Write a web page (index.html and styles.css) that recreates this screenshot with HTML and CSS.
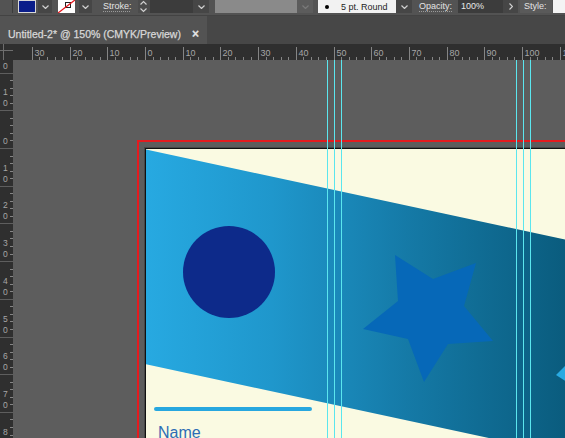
FILE: index.html
```html
<!DOCTYPE html>
<html lang="en">
<head>
  <meta charset="UTF-8">
  <title>Untitled-2* @ 150% (CMYK/Preview)</title>
  <link rel="stylesheet" href="styles.css">
</head>
<body>
  <div class="app">
    <!-- control bar -->
    <div class="control-bar">
      <div class="grip"></div>
      <div class="swatch fill"></div>
      <div class="drop"><svg width="7" height="4"><polyline points="0.5,0.5 3.5,3.5 6.5,0.5"/></svg></div>
      <div class="swatch stroke">
        <svg width="17" height="13">
          <rect x="7.5" y="2.5" width="5" height="5" fill="none" stroke="#222"/>
          <line x1="0" y1="13" x2="17" y2="0" stroke="#e8151b" stroke-width="1.3"/>
        </svg>
      </div>
      <div class="drop narrow"><svg width="7" height="4"><polyline points="0.5,0.5 3.5,3.5 6.5,0.5"/></svg></div>
      <span class="label stroke-label">Stroke:</span>
      <div class="spinner">
        <svg width="9" height="13">
          <polyline points="1.5,4.5 4.5,1.5 7.5,4.5"/>
          <polyline points="1.5,8.5 4.5,11.5 7.5,8.5"/>
        </svg>
      </div>
      <div class="input weight"></div>
      <div class="drop wide"><svg width="7" height="4"><polyline points="0.5,0.5 3.5,3.5 6.5,0.5"/></svg></div>
      <div class="field"></div>
      <div class="drop wide dim"><svg width="7" height="4"><polyline points="0.5,0.5 3.5,3.5 6.5,0.5"/></svg></div>
      <div class="brush"><span class="dot"></span><span>5 pt. Round</span></div>
      <div class="drop wide"><svg width="7" height="4"><polyline points="0.5,0.5 3.5,3.5 6.5,0.5"/></svg></div>
      <span class="label opacity-label">Opacity:</span>
      <div class="input opacity">100%</div>
      <div class="drop next"><svg width="4" height="7"><polyline points="0.5,0.5 3.5,3.5 0.5,6.5"/></svg></div>
      <span class="label style-label">Style:</span>
      <div class="style-box"></div>
    </div>

    <!-- document tab -->
    <div class="tab-bar">
      <div class="tab">
        <span class="tab-title">Untitled-2* @ 150% (CMYK/Preview)</span>
        <span class="tab-close">×</span>
      </div>
    </div>

    <!-- rulers + canvas -->
    <div class="workspace">
      <div class="ruler-corner">
        <svg width="13" height="16">
          <line x1="3.5" y1="0" x2="3.5" y2="16"/>
          <line x1="0" y1="6.5" x2="13" y2="6.5"/>
        </svg>
      </div>
      <svg id="ruler-h" class="ruler ruler-h" width="552" height="16" viewBox="13 44 552 16"></svg>
      <svg id="ruler-v" class="ruler ruler-v" width="13" height="378" viewBox="0 60 13 378"></svg>
      <div class="canvas">
        <svg class="art" width="552" height="378" viewBox="13 60 552 378">
          <defs>
            <linearGradient id="band-grad" gradientUnits="userSpaceOnUse" x1="146" y1="0" x2="565" y2="0">
              <stop offset="0" stop-color="#27a9e1"/>
              <stop offset="0.3" stop-color="#1f97cc"/>
              <stop offset="0.62" stop-color="#157aa7"/>
              <stop offset="1" stop-color="#0a5c7e"/>
            </linearGradient>
            <clipPath id="board-clip">
              <rect x="146" y="149" width="500" height="400"/>
            </clipPath>
          </defs>

          <!-- artboard edge -->
          <rect x="144" y="147" width="500" height="400" fill="#474747"/>
          <rect x="145" y="148" width="500" height="400" fill="#111"/>
          <rect class="board" x="146" y="149" width="500" height="400"/>

          <g clip-path="url(#board-clip)">
            <polygon fill="url(#band-grad)" points="146,149.5 700,268.6 700,483.4 146,364.3"/>
            <circle cx="229" cy="272" r="46" fill="#0d2a8a"/>
            <polygon fill="#0668b8" points="395,255 433,279 476,263 464,306 493,341 448,344 424,382 408,339 363,329 398,301"/>
            <polygon fill="#29aae2" points="556,375 570,361 570,384"/>
            <line x1="156" y1="409" x2="310" y2="409" stroke="#27a7df" stroke-width="4" stroke-linecap="round"/>
            <text class="name" x="158" y="437.5">Name</text>
          </g>

          <!-- bleed -->
          <rect x="137" y="140" width="428" height="2" fill="#e41b1f"/>
          <rect x="137" y="140" width="2" height="298" fill="#e41b1f"/>

          <!-- guides -->
          <g class="guides">
            <line x1="327.5" y1="60" x2="327.5" y2="438"/>
            <line x1="334.5" y1="60" x2="334.5" y2="438"/>
            <line x1="341.5" y1="60" x2="341.5" y2="438"/>
            <line x1="516.5" y1="60" x2="516.5" y2="438"/>
            <line x1="523.5" y1="60" x2="523.5" y2="438"/>
            <line x1="530.5" y1="60" x2="530.5" y2="438"/>
          </g>
        </svg>
      </div>
    </div>
  </div>

  <script>
    var NS = 'http://www.w3.org/2000/svg';
    var STEP = 37.7;

    function add(parent, tag, attrs, text) {
      var el = document.createElementNS(NS, tag);
      for (var key in attrs) el.setAttribute(key, attrs[key]);
      if (text !== undefined) el.textContent = text;
      parent.appendChild(el);
      return el;
    }

    // horizontal ruler, zero at the artboard's left edge
    var rulerH = document.getElementById('ruler-h');
    for (var k = -3; k <= 11; k++) {
      var x0 = 145 + k * STEP;
      var x = Math.round(x0) + 0.5;
      add(rulerH, 'line', { x1: x, y1: 47, x2: x, y2: 60, 'class': 'major' });
      add(rulerH, 'text', { x: x + 2, y: 56 }, String(Math.abs(k * 10)));
      for (var j = 1; j < 5; j++) {
        var mx = Math.round(x0 + j * STEP / 5) + 0.5;
        add(rulerH, 'line', { x1: mx, y1: 57, x2: mx, y2: 60, 'class': 'minor' });
      }
    }

    // vertical ruler, zero at the artboard's top edge; digits stacked above each mark
    var rulerV = document.getElementById('ruler-v');
    for (var n = -2; n <= 8; n++) {
      var y0 = 148 + n * STEP;
      var y = Math.round(y0) + 0.5;
      add(rulerV, 'line', { x1: 0, y1: y, x2: 13, y2: y, 'class': 'major' });
      var digits = String(Math.abs(n * 10)).split('').reverse();
      digits.forEach(function (d, i) {
        var base = y - 4.5 - i * 11.5;
        if (base > 68 && base < 437) add(rulerV, 'text', { x: 3, y: base }, d);
      });
      for (var m = 1; m < 5; m++) {
        var my = Math.round(y0 + m * STEP / 5) + 0.5;
        add(rulerV, 'line', { x1: 10, y1: my, x2: 13, y2: my, 'class': 'minor' });
      }
    }
  </script>
</body>
</html>
```

FILE: styles.css
```css
body {
  margin: 0;
  width: 565px;
  height: 438px;
  overflow: hidden;
  background: #5d5d5d;
  font-family: "Liberation Sans", Arial, sans-serif;
}

.app {
  display: flex;
  flex-direction: column;
  height: 438px;
}

/* ---- control bar ---- */
.control-bar {
  height: 15px;
  flex: none;
  display: flex;
  align-items: flex-start;
  background: #535353;
  font-size: 9px;
  color: #e4e4e4;
  white-space: nowrap;
  overflow: hidden;
}
.control-bar > * {
  flex: none;
  height: 13px;
  box-sizing: border-box;
}
.grip {
  width: 13px;
  border-right: 1px solid #3b3b3b;
}
.swatch {
  border: 1px solid #d8d8d8;
}
.swatch.fill {
  margin-left: 5px;
  width: 18px;
  background: #0b1e8a;
}
.swatch.stroke {
  margin-left: 6px;
  width: 17px;
  border: none;
  background: #fff;
}
.swatch.stroke svg {
  display: block;
}
.drop {
  display: flex;
  align-items: center;
  justify-content: center;
  width: 14px;
  margin-left: 2px;
  background: #464646;
}
.drop svg polyline,
.spinner svg polyline {
  fill: none;
  stroke: #d0d0d0;
  stroke-width: 1.2;
}
.drop.narrow {
  margin-left: 4px;
  width: 13px;
}
.drop.wide {
  margin-left: 0;
  width: 16px;
}
.drop.dim {
  background: #5c5c5c;
}
.drop.dim svg polyline {
  stroke: #7a7a7a;
}
.drop.next {
  margin-left: 0;
  width: 15px;
}
.label {
  line-height: 13px;
  text-decoration: underline dotted #9a9a9a;
  text-underline-offset: 2px;
}
.stroke-label {
  margin-left: 11px;
  width: 28px;
}
.spinner {
  margin-left: 7px;
  width: 12px;
  background: #4b4b4b;
}
.spinner svg {
  display: block;
  margin-left: 1px;
}
.input {
  background: #3c3c3c;
  line-height: 13px;
  color: #e8e8e8;
}
.input.weight {
  width: 43px;
}
.field {
  margin-left: 6px;
  width: 82px;
  background: #8a8a8a;
}
.brush {
  margin-left: 5px;
  width: 78px;
  display: flex;
  align-items: center;
  background: #f2f2f2;
  color: #1e1e1e;
}
.brush .dot {
  width: 4px;
  height: 4px;
  margin: 0 12px 0 7px;
  border-radius: 50%;
  background: #000;
}
.opacity-label {
  margin-left: 7px;
  width: 34px;
}
.input.opacity {
  margin-left: 5px;
  width: 45px;
  padding-left: 3px;
}
.style-label {
  margin-left: 2px;
  width: 32px;
  padding-left: 4px;
  box-sizing: border-box;
  background: #5a5a5a;
  text-decoration: none;
}
.style-box {
  margin-left: 1px;
  width: 20px;
  background: #f4f4f4;
}

/* ---- tab bar ---- */
.tab-bar {
  height: 29px;
  flex: none;
  display: flex;
  box-sizing: border-box;
  border-top: 1px solid #434343;
  background: #474747;
}
.tab {
  width: 207px;
  display: flex;
  align-items: center;
  box-sizing: border-box;
  padding: 8px 0 0 8px;
  background: #535353;
  color: #d8d8d8;
  font-size: 10.5px;
  -webkit-text-stroke: 0.25px #d8d8d8;
}
.tab-close {
  margin-left: auto;
  margin-right: 8px;
  font-size: 12px;
  font-weight: bold;
  color: #e6e6e6;
}

/* ---- workspace ---- */
.workspace {
  flex: 1;
  display: grid;
  grid-template-columns: 13px 1fr;
  grid-template-rows: 16px 1fr;
  min-height: 0;
}
.ruler-corner {
  background: #2f2f2f;
}
.ruler-corner svg {
  display: block;
}
.ruler-corner line {
  stroke: #6e6e6e;
  stroke-width: 1;
}
.ruler {
  display: block;
  background: #2f2f2f;
}
.ruler .major {
  stroke: #858585;
  stroke-width: 1;
}
.ruler-v .major {
  stroke: #5e5e5e;
}
.ruler .minor {
  stroke: #858585;
  stroke-width: 1;
}
.ruler text {
  font-family: "Liberation Sans", Arial, sans-serif;
  font-size: 9px;
  fill: #a6a6a6;
}
.ruler-v text {
  font-size: 8.5px;
}
.canvas {
  overflow: hidden;
  background: #5d5d5d;
}
.art {
  display: block;
}
.board {
  fill: #fafae2;
}
.name {
  font-family: "Liberation Sans", Arial, sans-serif;
  font-size: 16px;
  fill: #2c6db5;
}
.guides line {
  stroke: #5be6ee;
  stroke-width: 1;
}
```
